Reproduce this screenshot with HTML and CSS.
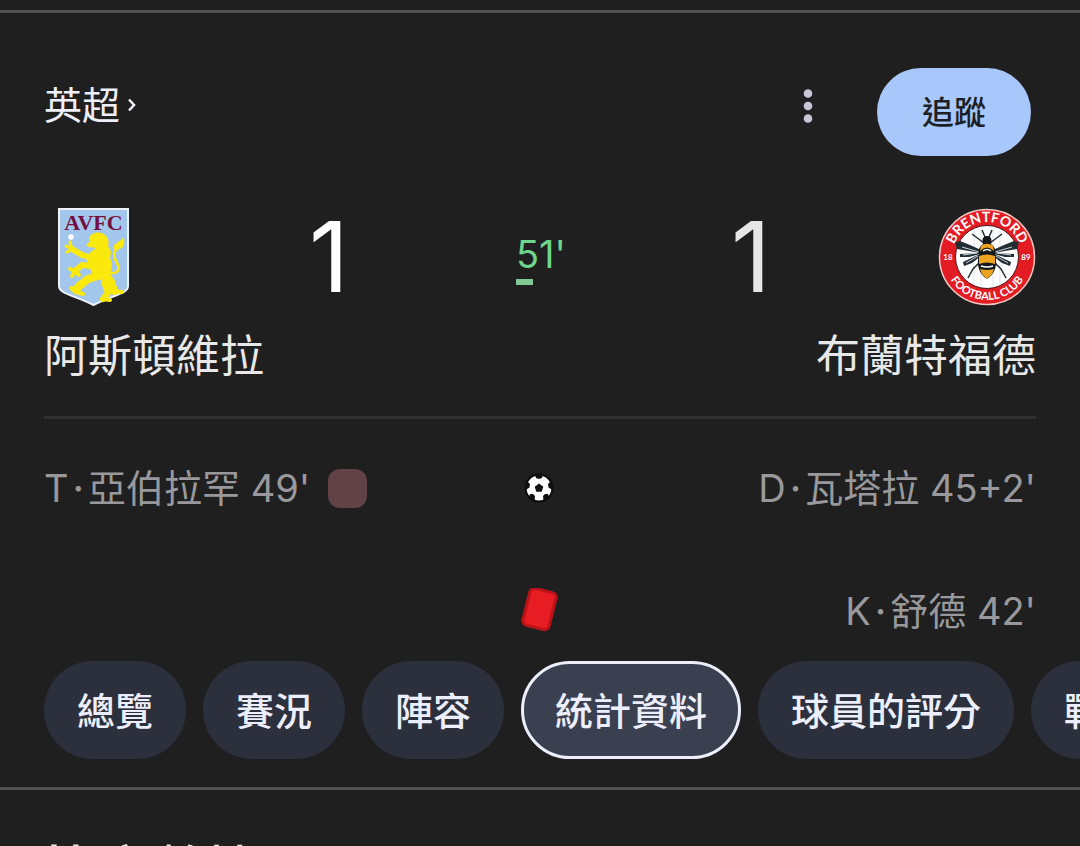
FILE: index.html
```html
<!DOCTYPE html>
<html lang="zh-Hant">
<head>
    <meta charset="UTF-8">
    <meta name="viewport" content="width=device-width, initial-scale=1.0">
    <title>阿斯頓維拉 - 布蘭特福德</title>
    <link rel="stylesheet" href="styles.css">
</head>
<body>
    <main class="match">
        <header class="match-header">
            <a class="league" href="#">英超
                <svg width="8" height="14" viewBox="0 0 8 14"><path d="M1 1.500 6 7 1 12.500" fill="none" stroke="currentColor" stroke-width="2.600"/></svg>
            </a>
            <button class="more-btn" aria-label="更多">
                <svg width="10" height="34" viewBox="0 0 10 34" fill="currentColor">
                    <circle cx="5" cy="4.500" r="4.300"/>
                    <circle cx="5" cy="17" r="4.300"/>
                    <circle cx="5" cy="29.500" r="4.300"/>
                </svg>
            </button>
            <button class="follow-btn">追蹤</button>
        </header>

        <section class="scoreboard">
            <!-- Aston Villa -->
            <svg class="crest" viewBox="0 0 98 98">
                <path d="M15 1H84V78C84 86 69 87 49.500 97C30 87 15 86 15 78Z" fill="#a3c6ec" stroke="#eef3fa" stroke-width="2"/>
                <text x="49.500" y="22" text-anchor="middle" class="villa-text">AVFC</text>
                <circle cx="27" cy="29" r="2.800" fill="#fff"/>
                <!-- lion: body, then limbs as thick strokes -->
                <path d="M45 30C47 24 57 22 62 28C65 31 65 35 64 38C68 42 67 46 66 50C69 56 68 63 65 67L62 70C56 74 50 70 48 65C46 60 44 57 43 53C42 48 45 45 48 43L52 40 45 39C41 38 42 35 46 34Z" fill="#fbe80c"/>
                <g fill="none" stroke="#fbe80c" stroke-linecap="round" stroke-linejoin="round">
                    <path d="M48 50 38 47 28 41" stroke-width="6"/>
                    <path d="M28 41 23 44M28 41 22 38M28 41 26 34" stroke-width="3"/>
                    <path d="M48 58 38 57 31 63" stroke-width="6"/>
                    <path d="M31 63 26 61M31 63 28 68M31 63 35 67" stroke-width="4"/>
                    <path d="M54 68 44 71 35 78 32 82" stroke-width="8"/>
                    <path d="M30 82 27 80M32 84 39 86" stroke-width="4"/>
                    <path d="M61 66 67 74 70 83" stroke-width="8"/>
                    <path d="M60 74 64 85 59 91" stroke-width="6"/>
                    <path d="M70 83 78 84M58 91 66 92" stroke-width="4"/>
                    <path d="M66 65C75 66 76 60 73 55C68 47 70 43 75 39" stroke-width="2.500"/>
                </g>
                <path d="M69 41C69 35 75 35 80 29C81 38 80 42 69 41Z" fill="#fbe80c"/>
            </svg>
            <div class="score">1</div>
            <div class="clock">51'</div>
            <div class="score score-away">1</div>
            <!-- Brentford -->
            <svg class="crest" viewBox="0 0 98 98">
                <defs>
                    <path id="ring-top" d="M14 49A35 35 0 0 1 84 49"/>
                    <path id="ring-bottom" d="M6 49A43 43 0 0 0 92 49"/>
                </defs>
                <circle cx="49" cy="49" r="47.500" fill="#e31b23" stroke="#f3c9c5" stroke-width="1.500"/>
                <circle cx="49" cy="49" r="31.500" fill="#fff" stroke="#4a1a1c" stroke-width="1"/>
                <path d="M36 22V77M43 20V79M55 20V79M62 22V77" stroke="#dfe2e4" stroke-width="1"/>
                <text class="ring-name"><textPath href="#ring-top" startOffset="50%" text-anchor="middle">BRENTFORD</textPath></text>
                <text class="ring-club"><textPath href="#ring-bottom" startOffset="50%" text-anchor="middle">FOOTBALL CLUB</textPath></text>
                <text class="ring-year" x="10" y="52" text-anchor="middle">18</text>
                <text class="ring-year" x="88" y="52" text-anchor="middle">89</text>
                <!-- wings -->
                <path fill="#222d34" d="M43 42 32 37 22 33 17 34 19 41 31 43 42 45 22 46 22 49 31 49 42 46 25 54 26 58 34 55 43 48ZM55 42 66 37 76 33 81 34 79 41 67 43 56 45 76 46 76 49 67 49 56 46 73 54 72 58 64 55 55 48Z"/>
                <path d="M24 39l17 5M25 47l14-2M28 55l12-7M74 39l-17 5M73 47l-14-2M70 55l-12-7" stroke="#c9d4dc" stroke-width="1"/>
                <!-- legs -->
                <path d="M46 35 34 26M52 35 64 26M47 29 44 22M51 29 54 22M43 53 35 61 30 70M55 53 63 61 68 70" fill="none" stroke="#222d34" stroke-width="1.500"/>
                <!-- body -->
                <path d="M49 28C54 28 54 33 53 36C58 40 58 44 57 47C60 56 57 66 49 71C41 66 38 56 41 47C40 44 40 40 45 36C44 33 44 28 49 28Z" fill="#15191b"/>
                <path d="M43 38C46 35 52 35 55 38L56 43Q49 36 42 43ZM41 48Q49 45 57 48V56Q49 53 41 56ZM42 61Q49 63 56 61L54 66 49 71 44 66Z" fill="#eda51f"/>
                <path d="M45 43q4-3 8 0M43 58q6 2 12 0" fill="none" stroke="#fff" stroke-width="1.500"/>
            </svg>
        </section>

        <div class="teams">
            <a href="#">阿斯頓維拉</a>
            <a href="#">布蘭特福德</a>
        </div>

        <section class="events">
            <div class="event">
                <div class="event-home">
                    <span>T<span class="sep">·</span>亞伯拉罕 49'</span>
                    <span class="live-dot"></span>
                </div>
                <svg width="30" height="30" viewBox="0 0 30 30">
                    <circle cx="14" cy="15" r="13.500" fill="#fff" stroke="#090909" stroke-width="2"/>
                    <path fill="#111" d="M14 10.500 18.300 13.700 16.700 18.800H11.300L9.700 13.700ZM10 1.500H18L17 5 14 6 11 5ZM0 10 3 9 5 11 4.500 14.500 .5 17ZM28 10 25 9 23 11 23.500 14.500 27.500 17ZM4 24 5 21 8 21 10 23 9.500 28ZM24 24 23 21 20 21 18 23 18.500 28Z"/>
                </svg>
                <div class="event-away">D<span class="sep">·</span>瓦塔拉 45+2'</div>
            </div>
            <div class="event">
                <div class="event-home"></div>
                <svg width="40" height="46" viewBox="0 0 40 46">
                    <rect x="6" y="2" width="27" height="38" rx="5" fill="#e81c23" stroke="#b91318" stroke-width="3" transform="rotate(14 19.500 21)"/>
                </svg>
                <div class="event-away">K<span class="sep">·</span>舒德 42'</div>
            </div>
        </section>

        <nav class="tabs">
            <button class="tab">總覽</button>
            <button class="tab">賽況</button>
            <button class="tab">陣容</button>
            <button class="tab active">統計資料</button>
            <button class="tab">球員的評分</button>
            <button class="tab">戰績</button>
        </nav>
    </main>

    <section class="stats">
        <h2>比賽數據</h2>
    </section>
</body>
</html>
```
FILE: styles.css
```css
* {
    box-sizing: border-box;
}

body {
    margin: 0;
    padding-top: 10px;
    background: #1f1f1f;
    color: #e8e8e8;
    font-family: Inter, "Noto Sans CJK TC", sans-serif;
}

a {
    color: inherit;
    text-decoration: none;
}

button {
    border: none;
    font-family: inherit;
    cursor: pointer;
}

.match {
    border-top: 3px solid #525252;
    border-bottom: 3px solid #525252;
    padding: 55px 0 28px;
}

.match-header {
    display: flex;
    align-items: flex-start;
    padding: 0 49px 0 44px;
}

.league {
    display: flex;
    align-items: center;
    gap: 8px;
    margin-right: auto;
    font-size: 38px;
    line-height: 74px;
    color: #eeeef8;
}

.more-btn {
    display: flex;
    align-items: center;
    height: 76px;
    margin-right: 40px;
    padding: 0 24px;
    background: none;
    color: #cac6d8;
}

.follow-btn {
    height: 88px;
    padding: 0 45px 4px;
    border-radius: 44px;
    background: #a8c7fa;
    color: #1b1f26;
    font-size: 32px;
    font-weight: 500;
}

.scoreboard {
    display: grid;
    grid-template-columns: 98px 1fr 48px 1fr 98px;
    align-items: center;
    margin-top: 52px;
    padding: 0 44px;
}

.crest {
    width: 98px;
    height: 98px;
}

.villa-text {
    font: bold 22px "Liberation Serif", serif;
    fill: #74103f;
}

.ring-name {
    font: bold 14px Lato, sans-serif;
    fill: #fff;
}

.ring-club {
    font: bold 11px Lato, sans-serif;
    fill: #fff;
}

.ring-year {
    font: bold 8px Lato, sans-serif;
    fill: #fff;
}

.score {
    font-size: 98px;
    line-height: 98px;
    text-align: center;
    color: #fff;
}

.score-away {
    color: #e6e6e6;
}

.clock {
    font-size: 38px;
    line-height: 50px;
    white-space: nowrap;
    color: #6dd58c;
}

.clock::after {
    content: "";
    display: block;
    width: 17px;
    height: 6px;
    background: #81c995;
}

.teams {
    display: flex;
    justify-content: space-between;
    margin: 20px 44px 0;
    padding-bottom: 30px;
    border-bottom: 3px solid #303030;
    font-size: 44px;
    line-height: 60px;
}

.events {
    display: grid;
    gap: 73px;
    padding: 44px 44px 25px;
    font-size: 38px;
    line-height: 50px;
    color: #99999d;
}

.event {
    display: grid;
    grid-template-columns: 1fr auto 1fr;
    align-items: center;
}

.event-home {
    display: flex;
    align-items: center;
    gap: 18px;
}

.event-away {
    text-align: right;
}

.sep {
    margin: 0 4px;
    font-weight: 500;
}

.live-dot {
    width: 39px;
    height: 39px;
    border-radius: 12px;
    background: #614347;
}

.tabs {
    display: flex;
    gap: 17px;
    padding-left: 44px;
    overflow-x: auto;
    scrollbar-width: none;
}

.tab {
    flex: none;
    height: 98px;
    padding: 0 33px 4px;
    border-radius: 49px;
    background: #2c303d;
    color: #eceefb;
    font-size: 38px;
    font-weight: 500;
}

.tab.active {
    border: 3px solid #eceefb;
    padding: 0 31px 4px;
    background: #3b4051;
}

.stats {
    padding: 50px 44px;
}

.stats h2 {
    margin: 0;
    font-size: 54px;
    line-height: 64px;
    font-weight: 500;
}
```
